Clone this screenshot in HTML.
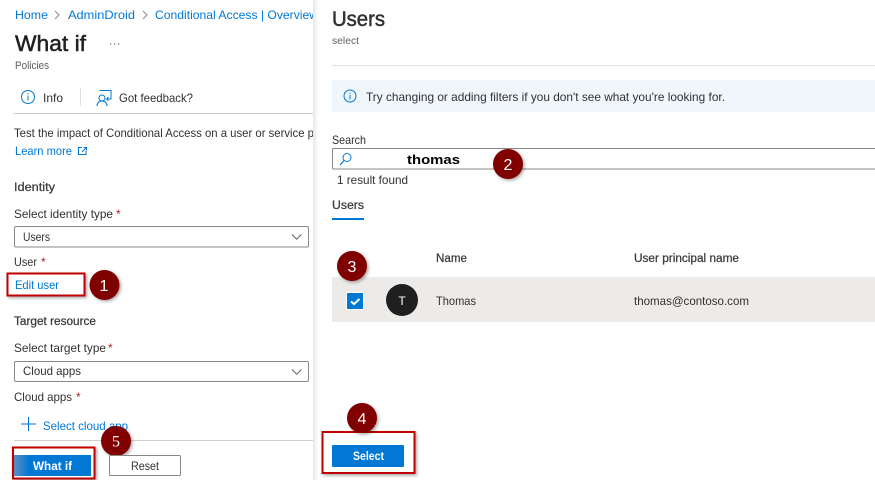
<!DOCTYPE html>
<html><head><meta charset="utf-8"><style>
html,body{margin:0;padding:0;background:#fff;width:875px;height:480px;overflow:hidden}
svg{display:block}
text{font-family:"Liberation Sans",sans-serif;font-size:12px;fill:#323130;white-space:pre}
.l{fill:#0078d4}
.n{fill:#fff;font-size:16px;text-anchor:middle}
.sb{font-size:11.500px;stroke:#3b3a39;stroke-width:.25;fill:#3b3a39}
</style></head><body>
<svg width="875" height="480" viewBox="0 0 875 480" xmlns="http://www.w3.org/2000/svg">
<defs>
<filter id="s" x="-20%" y="-20%" width="150%" height="150%"><feDropShadow dx="1.500" dy="1.500" stdDeviation="1.500" flood-color="#000" flood-opacity=".35"/></filter>
<linearGradient id="g" x1="0" x2="1" y1="0" y2="0"><stop offset="0" stop-color="#e6e6e6"/><stop offset="1" stop-color="#fff"/></linearGradient>
<linearGradient id="b" x1="0" x2="1" y1="0" y2="0"><stop offset="0" stop-color="#5a8fc0"/><stop offset=".2" stop-color="#0078d4"/></linearGradient>
</defs>
<rect width="875" height="480" fill="#fff"/>

<!-- left blade -->
<text class="l" x="15" y="19" textLength="33" lengthAdjust="spacingAndGlyphs">Home</text>
<path d="M55 11l4 4-4 4M143 11l4 4-4 4" fill="none" stroke="#8a8886"/>
<text class="l" x="68" y="19" textLength="67" lengthAdjust="spacingAndGlyphs">AdminDroid</text>
<text class="l" x="155" y="19" textLength="163" lengthAdjust="spacingAndGlyphs">Conditional Access | Overview</text>
<text x="15" y="51" style="font-size:22px;stroke:#201f1e;stroke-width:.5;fill:#201f1e" textLength="71" lengthAdjust="spacingAndGlyphs">What if</text>
<path d="M110 44h1.200M114 44h1.200M118 44h1.200" stroke="#444" fill="none"/>
<text x="15" y="69" style="font-size:11px;fill:#605e5c" textLength="34" lengthAdjust="spacingAndGlyphs">Policies</text>

<circle cx="28" cy="97" r="6.500" fill="none" stroke="#0078d4"/>
<path d="M28 95.500v5M28 93v1.300" stroke="#0078d4" fill="none"/>
<text x="43" y="102" textLength="20" lengthAdjust="spacingAndGlyphs">Info</text>
<rect x="80" y="88" width="1" height="18" fill="#e1dfdd"/>
<path d="M100 91V90.500H111V99H106.500M106.500 99l2-2M106.500 99l2 1.500" fill="none" stroke="#0078d4"/>
<circle cx="102" cy="98" r="3" fill="none" stroke="#0078d4"/>
<path d="M97 106c0-3 2-5 5-5s5 2 5 5" fill="none" stroke="#0078d4"/>
<text x="119" y="102" textLength="74" lengthAdjust="spacingAndGlyphs">Got feedback?</text>
<rect x="14" y="113" width="300" height="1" fill="#ccc"/>

<text x="14" y="137" textLength="300" lengthAdjust="spacingAndGlyphs">Test the impact of Conditional Access on a user or service p</text>
<text class="l" x="15" y="155" textLength="57" lengthAdjust="spacingAndGlyphs">Learn more</text>
<path d="M82 147.500H78.500V154.500H86V151M83.500 147.500H86.500V150.500M86.500 147.500L82 152" fill="none" stroke="#0078d4"/>

<text class="sb" x="14" y="191" textLength="41" lengthAdjust="spacingAndGlyphs">Identity</text>
<text x="14" y="218" textLength="99" lengthAdjust="spacingAndGlyphs">Select identity type</text>
<text x="116" y="218" style="fill:#a4262c">*</text>
<rect x="14.500" y="226.500" width="294" height="20.500" rx="1.500" fill="#fff" stroke="#8a8886"/>
<text x="23" y="241" textLength="27" lengthAdjust="spacingAndGlyphs">Users</text>
<path d="M292 234.500l4.700 4.700 4.700-4.700" fill="none" stroke="#605e5c"/>
<text x="14" y="266" textLength="23" lengthAdjust="spacingAndGlyphs">User</text>
<text x="41" y="266" style="fill:#a4262c">*</text>
<rect x="7.500" y="273.500" width="77" height="22" fill="#fff" stroke="#c00000" stroke-width="2" filter="url(#s)"/>
<text class="l" x="15" y="289" textLength="44" lengthAdjust="spacingAndGlyphs">Edit user</text>
<circle cx="104.500" cy="285" r="15" fill="#800000" filter="url(#s)"/>
<text class="n" x="104" y="291">1</text>

<text class="sb" x="14" y="325" textLength="82" lengthAdjust="spacingAndGlyphs">Target resource</text>
<text x="14" y="352" textLength="92" lengthAdjust="spacingAndGlyphs">Select target type</text>
<text x="108" y="352" style="fill:#a4262c">*</text>
<rect x="14.500" y="361.500" width="294" height="20" rx="1.500" fill="#fff" stroke="#8a8886"/>
<text x="23" y="375" textLength="58" lengthAdjust="spacingAndGlyphs">Cloud apps</text>
<path d="M292 369.500l4.700 4.700 4.700-4.700" fill="none" stroke="#605e5c"/>
<text x="14" y="401" textLength="58" lengthAdjust="spacingAndGlyphs">Cloud apps</text>
<text x="76" y="401" style="fill:#a4262c">*</text>
<path d="M21 424H36M28.500 417V431" stroke="#0078d4" fill="none"/>
<text class="l" x="43" y="430" textLength="85" lengthAdjust="spacingAndGlyphs">Select cloud app</text>
<rect x="14" y="440" width="300" height="1" fill="#d2d0ce"/>
<rect x="13" y="447.500" width="81.500" height="31" fill="#fff" stroke="#c00000" stroke-width="2" filter="url(#s)"/>
<rect x="14" y="455" width="77" height="21" fill="url(#b)"/>
<circle cx="116" cy="441" r="15" fill="#800000" filter="url(#s)"/>
<text class="n" x="116" y="446.500" style="font-family:'Liberation Serif',serif">5</text>
<text x="33" y="470" style="font-weight:bold;fill:#fff" textLength="39" lengthAdjust="spacingAndGlyphs">What if</text>
<rect x="109.500" y="455.500" width="71" height="20" rx="1" fill="#fff" stroke="#8a8886"/>
<text x="131" y="470" textLength="28" lengthAdjust="spacingAndGlyphs">Reset</text>

<!-- right panel -->
<rect x="313" y="0" width="5" height="480" fill="url(#g)"/>
<text x="332" y="26" style="font-size:21px;stroke:#323130;stroke-width:.5;fill:#323130" textLength="53" lengthAdjust="spacingAndGlyphs">Users</text>
<text x="332" y="44" style="font-size:10.500px;fill:#605e5c" textLength="27" lengthAdjust="spacingAndGlyphs">select</text>
<rect x="332" y="65" width="543" height="1" fill="#e1e1e1"/>
<rect x="332" y="80" width="543" height="32" fill="#eff6fc"/>
<circle cx="350" cy="96" r="6" fill="none" stroke="#0078d4"/>
<path d="M350 95v4.500M350 92.500v1.300" stroke="#0078d4" fill="none"/>
<text x="366" y="101" textLength="359" lengthAdjust="spacingAndGlyphs">Try changing or adding filters if you don't see what you're looking for.</text>
<text x="332" y="144" textLength="34" lengthAdjust="spacingAndGlyphs">Search</text>
<path d="M876 148.500H333.500a1 1 0 0 0-1 1V168a1 1 0 0 0 1 1H876" fill="#fff" stroke="#8a8886"/>
<circle cx="347" cy="157.500" r="4" fill="none" stroke="#0078d4"/>
<path d="M344 160.500L340 165" stroke="#0078d4" stroke-width="1.200" fill="none"/>
<text x="407" y="164" style="font-size:13px;font-weight:bold;fill:#000" textLength="53" lengthAdjust="spacingAndGlyphs">thomas</text>
<circle cx="508" cy="164" r="15" fill="#800000" filter="url(#s)"/>
<text class="n" x="508" y="170">2</text>
<text x="337" y="184" textLength="71" lengthAdjust="spacingAndGlyphs">1 result found</text>
<text class="sb" x="332" y="209" textLength="32" lengthAdjust="spacingAndGlyphs">Users</text>
<rect x="332" y="218" width="32" height="2" fill="#0078d4"/>

<text class="sb" x="436" y="262" textLength="31" lengthAdjust="spacingAndGlyphs">Name</text>
<text class="sb" x="634" y="262" textLength="105" lengthAdjust="spacingAndGlyphs">User principal name</text>
<rect x="332" y="277" width="543" height="45" fill="#edebe9"/>
<rect x="346.500" y="292.500" width="17" height="17" fill="#0078d4" stroke="#fff"/>
<path d="M351 301.500l3 2.500 5.500-5" fill="none" stroke="#fff" stroke-width="2"/>
<circle cx="402" cy="300" r="16" fill="#1f1f1f"/>
<text x="402" y="305" style="fill:#fff;text-anchor:middle">T</text>
<text x="436" y="305" textLength="40" lengthAdjust="spacingAndGlyphs">Thomas</text>
<text x="634" y="305" textLength="115" lengthAdjust="spacingAndGlyphs">thomas@contoso.com</text>
<circle cx="352" cy="266" r="15" fill="#800000" filter="url(#s)"/>
<text class="n" x="352" y="272">3</text>

<rect x="322.500" y="432" width="92" height="41" fill="#fff" stroke="#c00000" stroke-width="2" filter="url(#s)"/>
<circle cx="362" cy="418" r="15" fill="#800000" filter="url(#s)"/>
<text class="n" x="362" y="424">4</text>
<rect x="332" y="445" width="72" height="22" rx="1" fill="#0078d4"/>
<text x="353" y="460" style="font-weight:bold;fill:#fff" textLength="31" lengthAdjust="spacingAndGlyphs">Select</text>
</svg>
</body></html>
